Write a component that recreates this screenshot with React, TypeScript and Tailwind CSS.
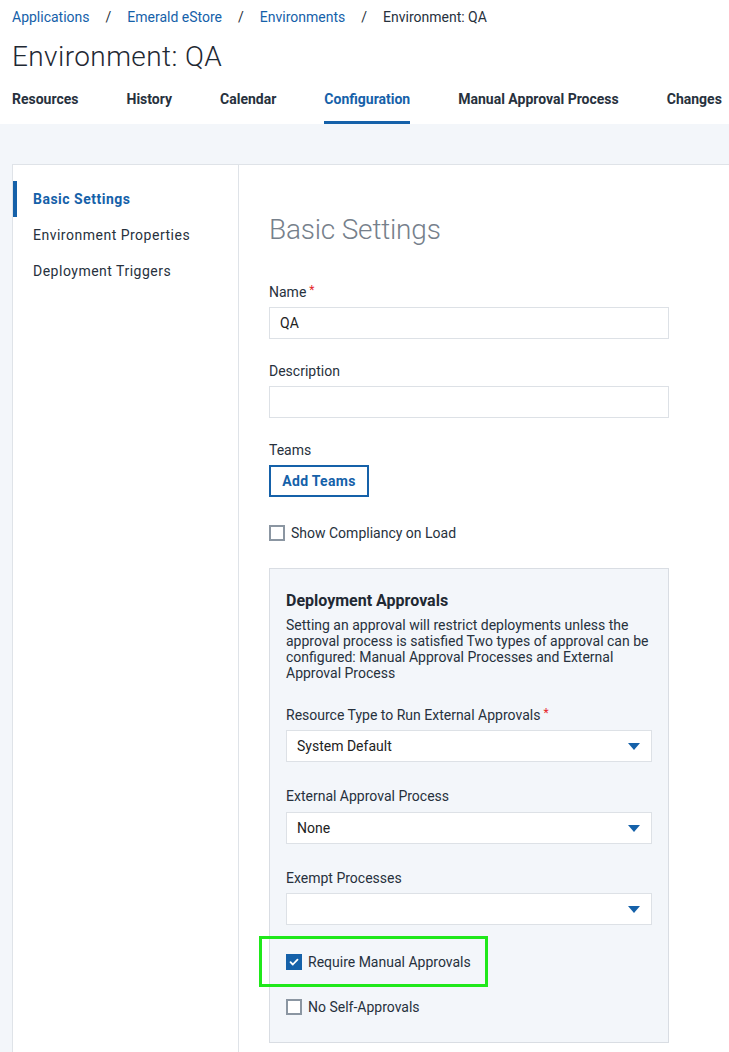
import React from 'react';

const crumbs = [ 'Applications', 'Emerald eStore', 'Environments' ];
const tabs = [ 'Resources', 'History', 'Calendar', 'Configuration', 'Manual Approval Process', 'Changes' ];
const sideItems = [ 'Basic Settings', 'Environment Properties', 'Deployment Triggers' ];

function Caret() {
  return (
    <svg className="w-3 h-[7px]" viewBox="0 0 12 7">
      <path d="M0 0h12L6 7z" fill="#1561a9" />
    </svg>
  );
}

function Checkbox({ checked }: { checked?: boolean }) {
  if (checked) {
    return (
      <span className="flex items-center justify-center w-4 h-4 bg-[#1561a9]">
        <svg className="w-[10px] h-[10px]" viewBox="0 0 10 10" fill="none">
          <path d="M1.5 5.2l2.3 2.3 4.7-4.9" stroke="#fff" strokeWidth={1.8} strokeLinecap="round" strokeLinejoin="round" />
        </svg>
      </span>
    );
  }
  return <span className="block w-4 h-4 border-2 border-[#8b96a2] bg-white" />;
}

function Label({ text, required }: { text: string; required?: boolean }) {
  return (
    <div className="text-sm leading-5 text-[#27313d]">
      {text}
      {required && <span className="text-[#e5252a] ml-[3px] text-xs align-top">*</span>}
    </div>
  );
}

function Select({ value, gap = 'mt-[5px]' }: { value?: string; gap?: string }) {
  return (
    <div className={`${gap} h-8 border border-[#dde1e6] bg-white flex items-center justify-between pl-[10px] pr-[11px] text-sm text-[#222]`}>
      <span>{value}</span>
      <Caret />
    </div>
  );
}

export default function App() {
  return (
    <div className="w-[729px] h-[1052px] overflow-hidden bg-[#f3f6fa] font-['Roboto',sans-serif]">
      {/* Header */}
      <div className="bg-white px-3">
        <div className="pt-[7px] flex items-center text-sm leading-5">
          {crumbs.map((c) => (
            <React.Fragment key={c}>
              <span className="text-[#1561a9]">{c}</span>
              <span className="mx-4 text-[#27313d]">/</span>
            </React.Fragment>
          ))}
          <span className="text-[#27313d]">Environment: QA</span>
        </div>
        <h1 className="mt-[13px] text-[28px] leading-[34px] font-light tracking-[0.4px] text-[#1f2933]">Environment: QA</h1>
        <div className="mt-[2px] flex gap-12 whitespace-nowrap">
          {tabs.map((t) => (
            <div
              key={t}
              className={`h-12 pt-[13px] text-sm leading-5 font-bold border-b-[3px] ${t === 'Configuration' ? 'text-[#1561a9] border-[#1561a9]' : 'text-[#27313d] border-transparent'}`}
            >
              {t}
            </div>
          ))}
        </div>
      </div>

      {/* Body */}
      <div className="pt-10 pl-3">
        <div className="w-[760px] min-h-[900px] bg-white border border-[#dfe3e8] flex">
          {/* Sidebar */}
          <div className="w-[226px] border-r border-[#dfe3e8] pt-4 shrink-0">
            {sideItems.map((s, i) => (
              <div
                key={s}
                className={`h-9 flex items-center pl-4 border-l-4 text-sm tracking-[0.5px] ${i === 0 ? 'border-[#1561a9] text-[#1561a9] font-bold' : 'border-transparent text-[#27313d]'}`}
              >
                {s}
              </div>
            ))}
          </div>

          {/* Content */}
          <div className="pl-[30px] pt-12 flex-1">
            <h2 className="text-[28px] leading-[34px] font-light tracking-[-0.2px] text-[#76808b]">Basic Settings</h2>

            <div className="w-[400px]">
              <div className="mt-[35px]">
                <Label text="Name" required />
                <div className="mt-[5px] h-8 border border-[#dde1e6] flex items-center pl-[10px] text-sm text-[#222]">QA</div>
              </div>
              <div className="mt-[22px]">
                <Label text="Description" />
                <div className="mt-[5px] h-8 border border-[#dde1e6]" />
              </div>
              <div className="mt-[22px]">
                <Label text="Teams" />
                <button className="mt-[5px] h-8 w-[100px] border-2 border-[#1561a9] text-[#1561a9] text-sm font-bold tracking-[0.3px] flex items-center justify-center">
                  Add Teams
                </button>
              </div>
              <div className="mt-[26px] flex items-center gap-[6px] text-sm leading-5 text-[#27313d]">
                <Checkbox />
                Show Compliancy on Load
              </div>

              {/* Deployment approvals panel */}
              <div className="mt-[25px] bg-[#f3f6fa] border border-[#d9dde3] pt-[22px] pb-[25px] px-4">
                <div className="text-base leading-5 font-bold text-[#1f2933]">Deployment Approvals</div>
                <p className="mt-[6px] text-sm leading-4 text-[#27313d]">
                  Setting an approval will restrict deployments unless the approval process is satisfied Two types of approval can be configured: Manual Approval Processes and External Approval Process
                </p>
                <div className="mt-[24px]">
                  <Label text="Resource Type to Run External Approvals" required />
                  <Select value="System Default" />
                </div>
                <div className="mt-[24px]">
                  <Label text="External Approval Process" />
                  <Select value="None" gap="mt-[6px]" />
                </div>
                <div className="mt-[24px]">
                  <Label text="Exempt Processes" />
                  <Select />
                </div>
                <div className="relative mt-[27px] flex items-center gap-[6px] text-sm leading-5 text-[#27313d]">
                  <Checkbox checked />
                  Require Manual Approvals
                  <div className="absolute -left-[27px] -top-[16px] w-[229px] h-[51px] border-[3px] border-[#1fe81a]" />
                </div>
                <div className="mt-[25px] flex items-center gap-[6px] text-sm leading-5 text-[#27313d]">
                  <Checkbox />
                  No Self-Approvals
                </div>
              </div>
            </div>
          </div>
        </div>
      </div>
    </div>
  );
}
